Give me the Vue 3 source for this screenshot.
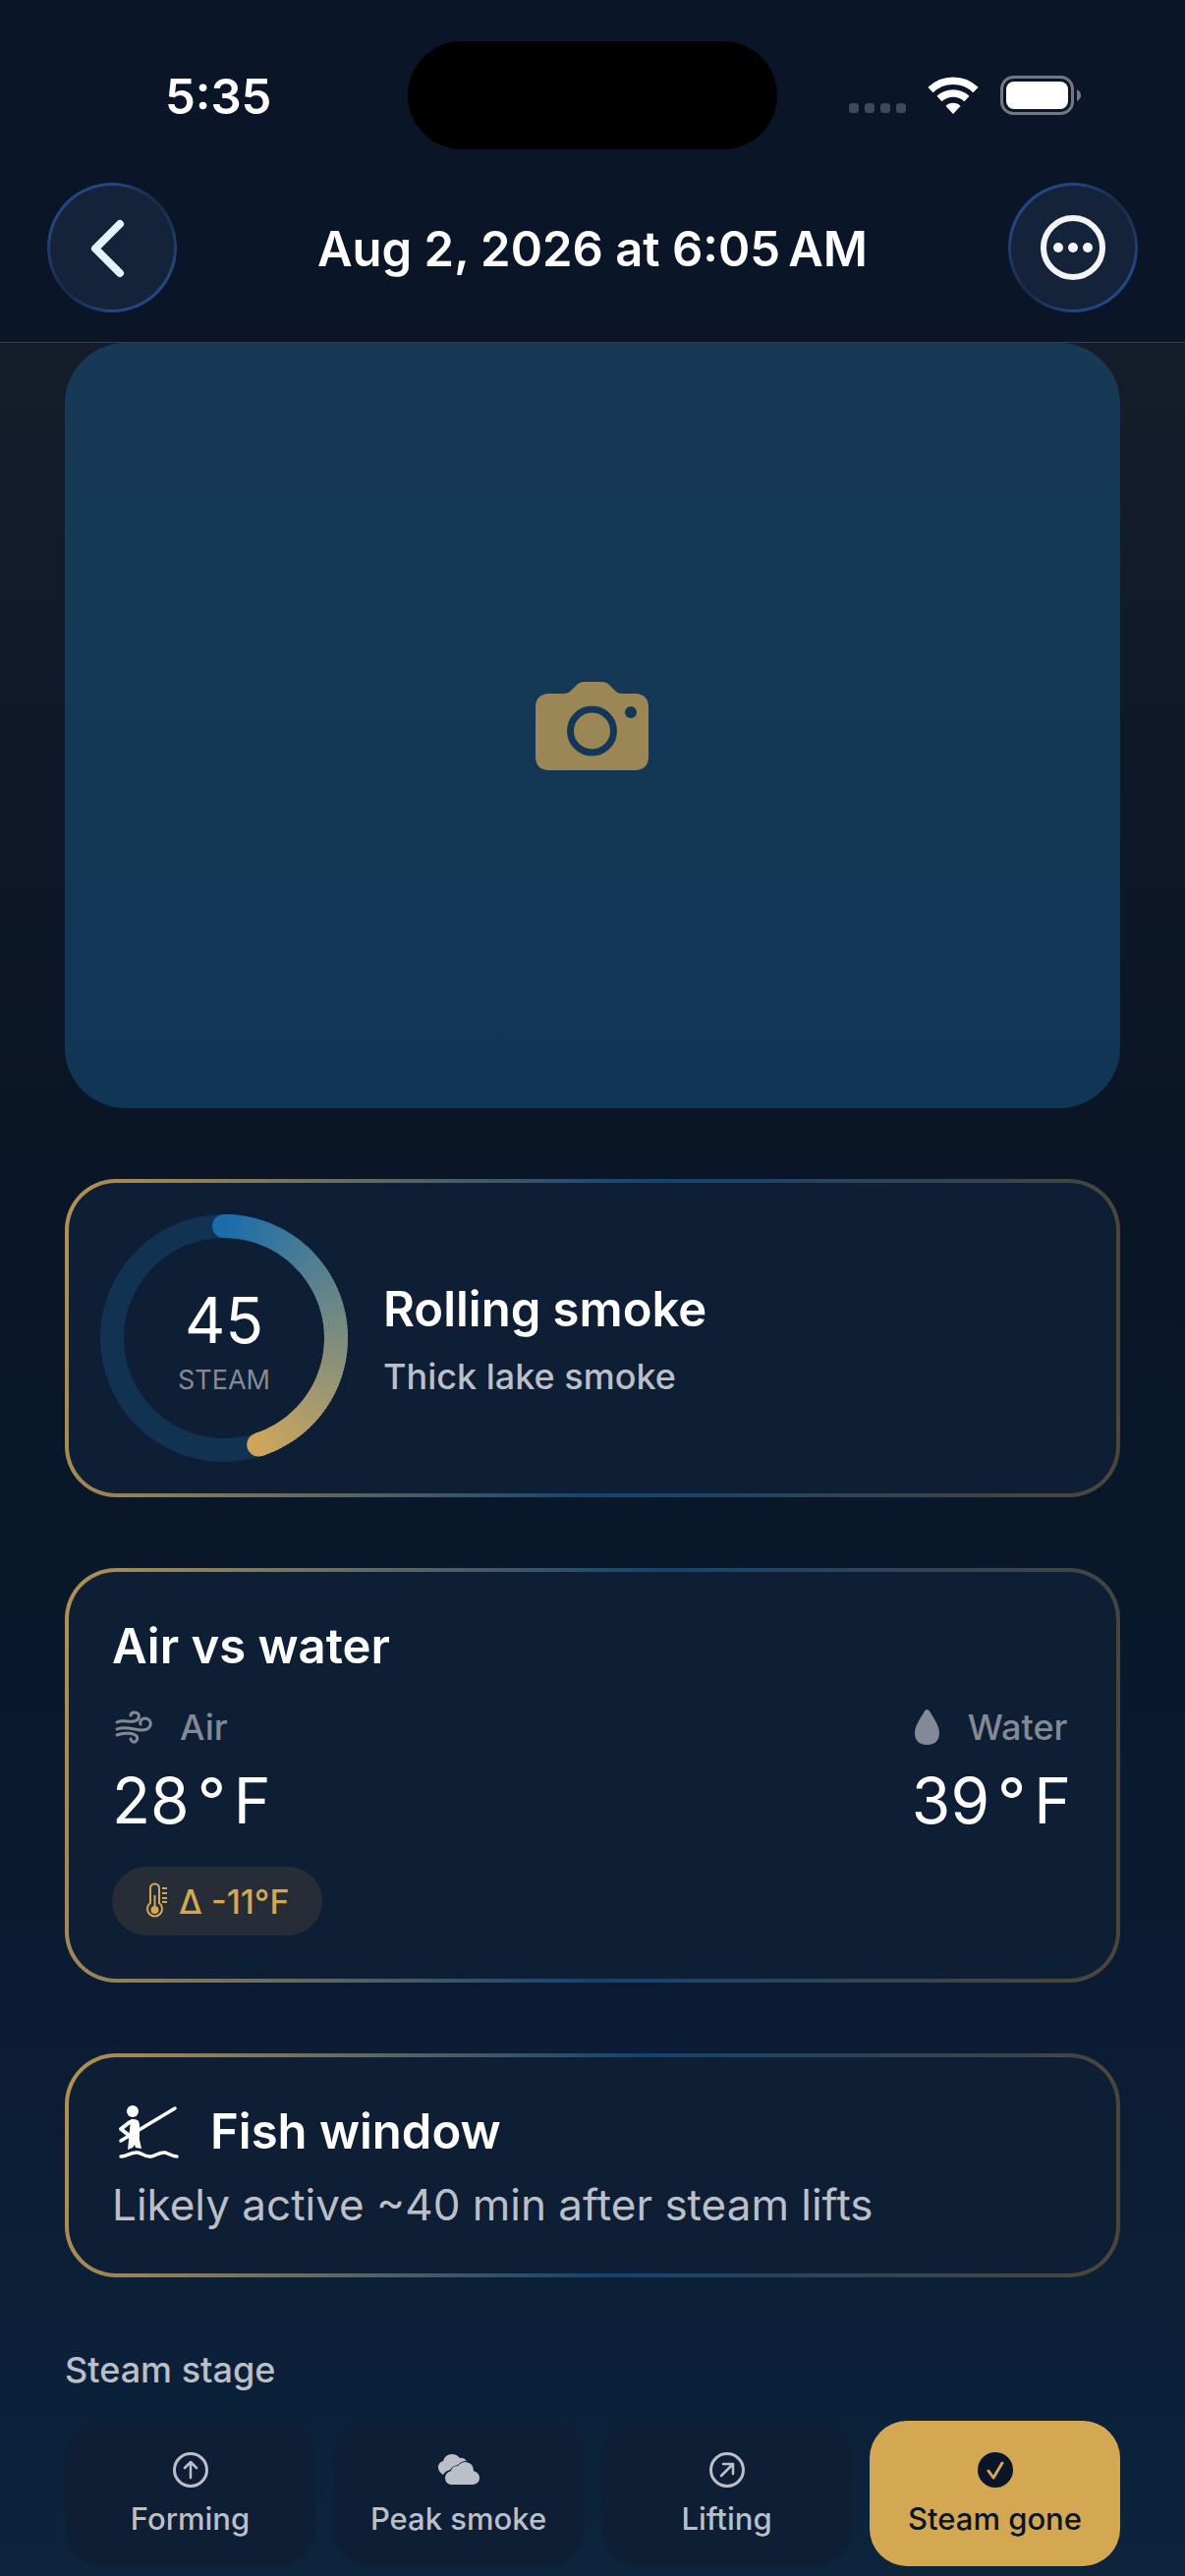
<script setup>
const score = 45
const radius = 114
const steps = 81

const mix = (t) => {
  const from = [27, 109, 170]
  const to = [205, 166, 92]
  return `rgb(${from.map((c, i) => Math.round(c + (to[i] - c) * t)).join(',')})`
}

const point = (deg) => {
  const a = (deg * Math.PI) / 180
  return [126 + radius * Math.sin(a), 126 - radius * Math.cos(a)]
}

const sweep = (score / 100) * 360
const segments = Array.from({ length: steps }, (_, i) => {
  const a = point((sweep * i) / steps)
  const b = point(Math.min(sweep, (sweep * (i + 1.5)) / steps))
  return {
    d: `M${a[0]} ${a[1]}A${radius} ${radius} 0 0 1 ${b[0]} ${b[1]}`,
    color: mix(i / (steps - 1)),
  }
})
const start = point(0)
const end = point(sweep)

const stages = [
  { id: 'forming', label: 'Forming' },
  { id: 'peak', label: 'Peak smoke' },
  { id: 'lifting', label: 'Lifting' },
  { id: 'gone', label: 'Steam gone', active: true },
]
</script>

<template>
  <div class="screen">
    <header class="top">
      <div class="status">
        <span class="time">5:35</span>
        <span class="island"></span>
        <div class="signals">
          <svg width="58" height="38" viewBox="0 0 58 38" fill="#3e4857">
            <rect x="0" y="27" width="10" height="10" rx="3" />
            <rect x="16" y="27" width="10" height="10" rx="3" />
            <rect x="32" y="27" width="10" height="10" rx="3" />
            <rect x="48" y="27" width="10" height="10" rx="3" />
          </svg>
          <svg width="52" height="38" viewBox="0 0 52 38" fill="none" stroke="#fff">
            <path d="M3 13.5a33 33 0 0 1 46 0" stroke-width="7.5" />
            <path d="M12 22.5a20.5 20.5 0 0 1 28 0" stroke-width="7.5" />
            <path d="M26 38l-7.5-8a10.5 10.5 0 0 1 15 0z" fill="#fff" stroke="none" />
          </svg>
          <svg width="82" height="40" viewBox="0 0 82 40">
            <rect x="1.5" y="1.5" width="72" height="37" rx="12" fill="none" stroke="#717784" stroke-width="3" />
            <rect x="6" y="6" width="63" height="28" rx="8" fill="#fff" />
            <path d="M78 14q4 2 4 6t-4 6z" fill="#717784" />
          </svg>
        </div>
      </div>
      <nav class="nav">
        <button class="round" type="button" aria-label="Back">
          <svg width="132" height="132" viewBox="0 0 132 132" fill="none" stroke="#e4f3ff" stroke-width="8" stroke-linecap="round" stroke-linejoin="round">
            <path d="M74 42L49 67l25 25" />
          </svg>
        </button>
        <h1>Aug 2, 2026 at 6:05&#8239;AM</h1>
        <button class="round" type="button" aria-label="More">
          <svg width="132" height="132" viewBox="0 0 132 132" fill="#f3f4f6">
            <circle cx="66" cy="66" r="30" fill="none" stroke="#f3f4f6" stroke-width="6" />
            <circle cx="51" cy="66" r="5" /><circle cx="66" cy="66" r="5" /><circle cx="81" cy="66" r="5" />
          </svg>
        </button>
      </nav>
    </header>

    <main>
      <div class="photo">
        <svg width="116" height="90" viewBox="0 0 116 90">
          <path fill="#9b8756" d="M14 12h14c4 0 6-1 8-3l5-5c3-3 5-4 9-4h17c4 0 6 1 9 4l5 5c2 2 4 3 8 3h12c9 0 14 5 14 14v50c0 9-5 14-14 14H14C5 90 0 85 0 76V26c0-9 5-14 14-14z" />
          <circle cx="57.5" cy="50" r="22" fill="none" stroke="#143757" stroke-width="7" />
          <circle cx="97" cy="31" r="6" fill="#143757" />
        </svg>
      </div>

      <section class="card score">
        <div class="ring">
          <svg width="252" height="252" viewBox="0 0 252 252" fill="none" stroke-width="24">
            <circle cx="126" cy="126" :r="radius" stroke="#113250" />
            <circle :cx="start[0]" :cy="start[1]" r="12" :fill="mix(0)" stroke="none" />
            <circle :cx="end[0]" :cy="end[1]" r="12" :fill="mix(1)" stroke="none" />
            <path v-for="(s, i) in segments" :key="i" :d="s.d" :stroke="s.color" />
          </svg>
          <div class="reading">
            <strong>{{ score }}</strong>
            <span>STEAM</span>
          </div>
        </div>
        <div class="summary">
          <h2>Rolling smoke</h2>
          <p>Thick lake smoke</p>
        </div>
      </section>

      <section class="card temps">
        <h2>Air vs water</h2>
        <div class="pair">
          <div>
            <p class="kind">
              <svg width="45" height="40" viewBox="0 0 45 40" fill="none" stroke="#828a97" stroke-width="3" stroke-linecap="round">
                <path d="M5 15c6-3 11 0 17-1 7-1 7-9 1-9-2 0-4 1-4 3" />
                <path d="M5 22c9-4 17 1 26 1 10 0 11-11 3-12-4 0-6 3-5 6" />
                <path d="M5 28c7-3 17-2 20 1 3 5-4 9-6 3" />
              </svg>
              <span>Air</span>
            </p>
            <p class="degrees"><span>28</span><span>°</span><span>F</span></p>
          </div>
          <div>
            <p class="kind">
              <svg width="33" height="40" viewBox="0 0 33 40">
                <path fill="#828a97" d="M15.5 2c1.5 0 2 1 3 2.5C23 12 28 19 28 26c0 8-5 12-12.5 12S3 34 3 26C3 19 8 12 12.5 4.5c1-1.5 1.5-2.5 3-2.5z" />
              </svg>
              <span>Water</span>
            </p>
            <p class="degrees"><span>39</span><span>°</span><span>F</span></p>
          </div>
        </div>
        <span class="delta">
          <svg width="24" height="40" viewBox="0 0 24 40" fill="none" stroke="#d4a853" stroke-width="2">
            <path d="M5 22V7a4 4 0 0 1 9 0v15a7.5 7.5 0 1 1-9 0z" />
            <path d="M9.5 14v12" />
            <circle cx="9.5" cy="29" r="4" fill="#d4a853" stroke="none" />
            <path d="M17 7h5M17 12h5M17 17h5M17 21h5" />
          </svg>
          Δ -11°F
        </span>
      </section>

      <section class="card fish">
        <h2>
          <svg width="70" height="58" viewBox="0 0 70 58" fill="none" stroke="#fff" stroke-width="3.5" stroke-linecap="round" stroke-linejoin="round">
            <circle cx="21" cy="8" r="6" fill="#fff" stroke="none" />
            <path d="M9 38L64 5" />
            <path d="M18 19L9 26l9 7" stroke-width="4" />
            <path fill="#fff" stroke="none" d="M19 16h3q6 0 6 6v15l2 9-6-1-1-3-2 3-5 2 1-10z" />
            <path d="M9 54c7 0 10-5 17-4 6 1 8 5 14 4s8-5 14-4c4 1 7 4 12 4" />
          </svg>
          Fish window
        </h2>
        <p>Likely active ~40 min after steam lifts</p>
      </section>

      <section class="stages">
        <h3>Steam stage</h3>
        <div class="chips">
          <button v-for="s in stages" :key="s.id" type="button" class="chip" :class="{ active: s.active }" :aria-pressed="!!s.active">
            <svg width="44" height="36" viewBox="0 0 44 36" fill="none" stroke="#bbbfc8" stroke-width="3" stroke-linecap="round" stroke-linejoin="round">
              <template v-if="s.id === 'forming'">
                <circle cx="22" cy="18" r="16.5" />
                <path d="M22 26V11M16 16l6-6 6 6" stroke-width="2.5" />
              </template>
              <template v-else-if="s.id === 'peak'">
                <path fill="#bbbfc8" stroke="none" d="M6 23Q0 19 1 14 2 10 6 9 8 2 15 2q5 0 8 4 4-1 7 3-6 0-9 4-6 1-8 5-5 1-7 5z" />
                <path fill="#bbbfc8" stroke="none" d="M14 33q-6-1-6-7 0-5 6-7 1-5 7-5 3-4 8-4 8 1 8 9 6 2 6 7 0 6-7 7z" />
              </template>
              <template v-else-if="s.id === 'lifting'">
                <circle cx="22" cy="18" r="16.5" />
                <path d="M16 24L28 12M18 12h10v10" stroke-width="2.5" />
              </template>
              <template v-else>
                <circle cx="22" cy="18" r="18" fill="#0a1527" stroke="none" />
                <path d="M15 19l5 7 9-15" stroke="#d4a853" />
              </template>
            </svg>
            <span>{{ s.label }}</span>
          </button>
        </div>
      </section>
    </main>
  </div>
</template>

<style>
body {
  margin: 0;
  background: #0c243c;
}
</style>

<style scoped>
.screen {
  min-height: 100vh;
  box-sizing: border-box;
  font-family: Inter, "Liberation Sans", sans-serif;
  color: #fff;
  background: linear-gradient(180deg, #171d29 0%, #151d2b 14%, #0a1526 44%, #08182a 59%, #0b1b33 78%, #0c243c 100%);
}
h1, h2, h3, p {
  margin: 0;
  font-weight: 600;
}
svg {
  display: block;
  flex: none;
}
button {
  font: inherit;
  color: inherit;
  border: 0;
  padding: 0;
}
.top {
  background: #0a1527;
  border-bottom: 1px solid #36404c;
  padding: 42px 48px 30px;
}
.status {
  display: grid;
  grid-template-columns: 1fr 376px 1fr;
  align-items: center;
  height: 110px;
}
.time {
  font-size: 49px;
  line-height: 60px;
  font-weight: 600;
  padding: 3px 0 0 120px;
}
.island {
  height: 110px;
  border-radius: 55px;
  background: #000;
}
.signals {
  display: flex;
  justify-content: flex-end;
  align-items: center;
  gap: 22px;
  padding-right: 58px;
}
.nav {
  display: flex;
  align-items: center;
  justify-content: space-between;
  margin-top: 34px;
}
.nav h1 {
  font-size: 49px;
  line-height: 60px;
  padding-top: 3px;
}
.round {
  width: 132px;
  height: 132px;
  border-radius: 50%;
  border: 3px solid transparent;
  background:
    linear-gradient(#14223a, #14223a) padding-box,
    conic-gradient(#23477f 0deg, #182a48 45deg, #23477f 110deg, #23477f 180deg, #182a48 225deg, #23477f 290deg, #23477f 360deg) border-box;
}
.round svg {
  margin: -3px;
}
main {
  padding: 0 66px 10px;
}
.photo {
  height: 779px;
  border-radius: 62px;
  background: linear-gradient(180deg, #173956, #113655);
  display: flex;
  align-items: center;
  justify-content: center;
}
.card {
  margin-top: 72px;
  border: 4px solid transparent;
  border-radius: 52px;
  background:
    linear-gradient(#0e1e35, #0e1e35) padding-box,
    linear-gradient(100deg, #b49150 0%, #144370 53%, #4d4639 100%) border-box;
}
.card h2 {
  font-size: 49px;
  line-height: 60px;
}
.score {
  display: flex;
  align-items: center;
  gap: 36px;
  padding: 32px;
}
.ring {
  display: grid;
}
.ring > * {
  grid-area: 1 / 1;
}
.reading {
  display: flex;
  flex-direction: column;
  align-items: center;
  justify-content: center;
  padding-top: 8px;
}
.reading strong {
  font-size: 64px;
  line-height: 78px;
  font-weight: 400;
}
.reading span {
  font-size: 27px;
  line-height: 44px;
  color: #858b97;
}
.summary {
  padding-top: 4px;
}
.summary p {
  font-size: 36px;
  line-height: 48px;
  margin-top: 14px;
  font-weight: 500;
  color: #bbbfc8;
}
.temps {
  padding: 46px 44px 44px;
}
.pair {
  display: flex;
  justify-content: space-between;
  margin-top: 28px;
  padding-right: 2px;
}
.kind {
  display: flex;
  align-items: center;
  gap: 24px;
  font-size: 36px;
  line-height: 48px;
  font-weight: 500;
  color: #828a97;
}
.degrees {
  display: flex;
  gap: 8px;
  font-size: 64px;
  line-height: 78px;
  font-weight: 400;
  margin-top: 12px;
}
.delta {
  display: inline-flex;
  align-items: center;
  gap: 10px;
  height: 70px;
  margin-top: 28px;
  padding: 0 34px;
  border-radius: 35px;
  background: #262d36;
  color: #d4a853;
  font-size: 34px;
  font-weight: 500;
}
.fish {
  padding: 46px 44px 40px;
}
.fish h2 {
  display: flex;
  align-items: center;
  gap: 30px;
}
.fish p {
  font-size: 44px;
  line-height: 60px;
  font-weight: 400;
  margin-top: 14px;
  color: #bbbfc8;
}
.stages {
  margin-top: 70px;
}
.stages h3 {
  font-size: 36px;
  line-height: 48px;
  font-weight: 500;
  color: #bbbfc8;
}
.chips {
  display: grid;
  grid-template-columns: repeat(4, 1fr);
  gap: 18px;
  margin-top: 28px;
}
.chip {
  display: flex;
  flex-direction: column;
  align-items: center;
  gap: 12px;
  padding: 32px 0 28px;
  border-radius: 38px;
  background: #0e1e35;
  color: #bbbfc8;
  font-size: 31px;
  line-height: 40px;
  font-weight: 500;
}
.chip.active {
  background: #d4a853;
  color: #0a1527;
}
</style>
